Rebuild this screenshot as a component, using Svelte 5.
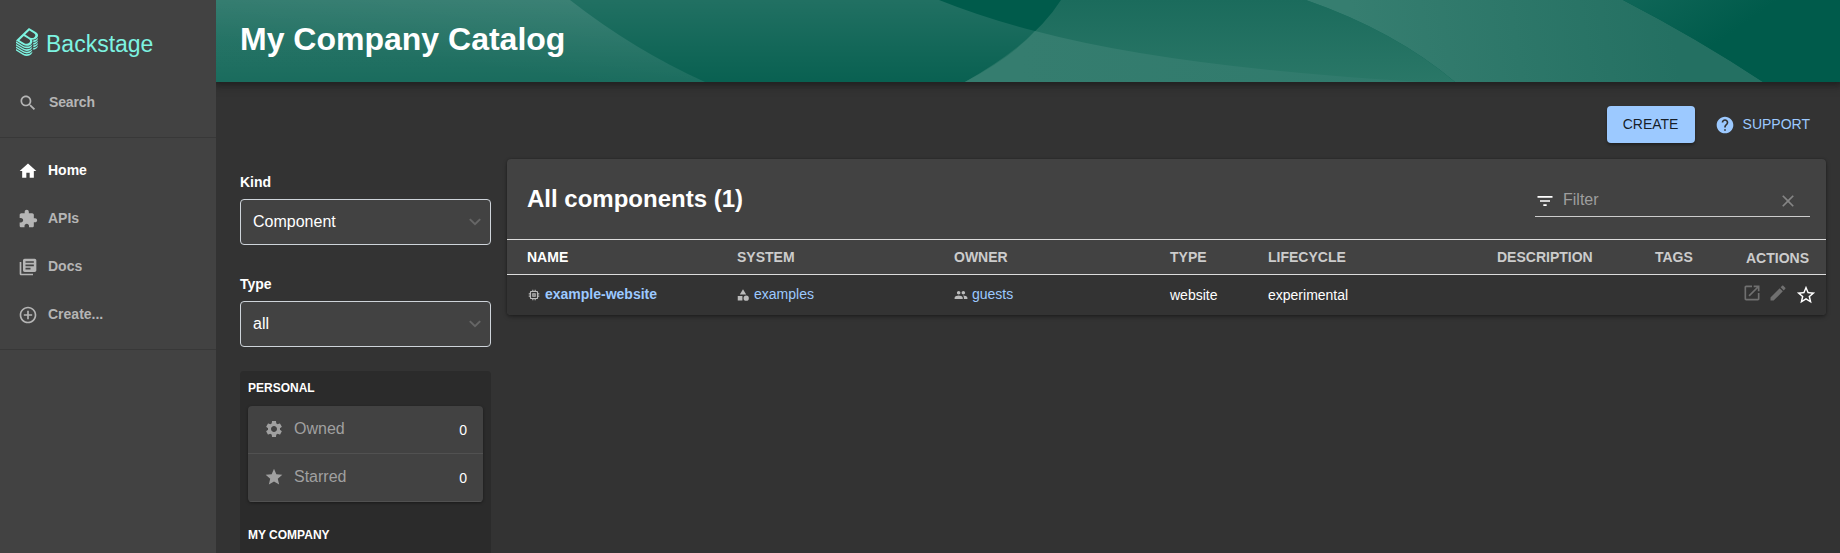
<script>
  const icons = {
    search: 'M15.5 14h-.79l-.28-.27C15.41 12.59 16 11.11 16 9.5 16 5.91 13.09 3 9.5 3S3 5.91 3 9.5 5.91 16 9.5 16c1.61 0 3.09-.59 4.23-1.57l.27.28v.79l5 4.99L20.49 19l-4.99-5zm-6 0C7.01 14 5 11.99 5 9.5S7.01 5 9.5 5 14 7.01 14 9.5 11.99 14 9.5 14z',
    home: 'M10 20v-6h4v6h5v-8h3L12 3 2 12h3v8z',
    apis: 'M20.5 11H19V7c0-1.1-.9-2-2-2h-4V3.5C13 2.12 11.88 1 10.5 1S8 2.12 8 3.5V5H4c-1.1 0-1.99.9-1.99 2v3.8H3.5c1.49 0 2.7 1.21 2.7 2.7s-1.21 2.7-2.7 2.7H2V20c0 1.1.9 2 2 2h3.8v-1.5c0-1.49 1.21-2.7 2.7-2.7 1.49 0 2.7 1.21 2.7 2.7V22H17c1.1 0 2-.9 2-2v-4h1.5c1.38 0 2.5-1.12 2.5-2.5S21.88 11 20.5 11z',
    docs: 'M4 6H2v14c0 1.1.9 2 2 2h14v-2H4V6zm16-4H8c-1.1 0-2 .9-2 2v12c0 1.1.9 2 2 2h12c1.1 0 2-.9 2-2V4c0-1.1-.9-2-2-2zm-1 9H9V9h10v2zm-4 4H9v-2h6v2zm4-8H9V5h10v2z',
    create: 'M13 7h-2v4H7v2h4v4h2v-4h4v-2h-4V7zm-1-5C6.48 2 2 6.48 2 12s4.48 10 10 10 10-4.48 10-10S17.52 2 12 2zm0 18c-4.41 0-8-3.59-8-8s3.59-8 8-8 8 3.59 8 8-3.59 8-8 8z',
    help: 'M12 2C6.48 2 2 6.48 2 12s4.48 10 10 10 10-4.48 10-10S17.52 2 12 2zm1 17h-2v-2h2v2zm2.07-7.75l-.9.92C13.45 12.9 13 13.5 13 15h-2v-.5c0-1.1.45-2.1 1.17-2.83l1.24-1.26c.37-.36.59-.86.59-1.41 0-1.1-.9-2-2-2s-2 .9-2 2H8c0-2.21 1.79-4 4-4s4 1.79 4 4c0 .88-.36 1.68-.93 2.25z',
    settings: 'M19.14 12.94c.04-.3.06-.61.06-.94 0-.32-.02-.64-.07-.94l2.03-1.58c.18-.14.23-.41.12-.61l-1.92-3.32c-.12-.22-.37-.29-.59-.22l-2.39.96c-.5-.38-1.03-.7-1.62-.94l-.36-2.54c-.04-.24-.24-.41-.48-.41h-3.84c-.24 0-.43.17-.47.41l-.36 2.54c-.59.24-1.13.57-1.62.94l-2.39-.96c-.22-.08-.47 0-.59.22L2.74 8.87c-.12.21-.08.47.12.61l2.03 1.58c-.05.3-.09.63-.09.94s.02.64.07.94l-2.03 1.58c-.18.14-.23.41-.12.61l1.92 3.32c.12.22.37.29.59.22l2.39-.96c.5.38 1.03.7 1.62.94l.36 2.54c.05.24.24.41.48.41h3.84c.24 0 .44-.17.47-.41l.36-2.54c.59-.24 1.13-.56 1.62-.94l2.39.96c.22.08.47 0 .59-.22l1.92-3.32c.12-.22.07-.47-.12-.61l-2.01-1.58zM12 15.6c-1.98 0-3.6-1.62-3.6-3.6s1.62-3.6 3.6-3.6 3.6 1.62 3.6 3.6-1.62 3.6-3.6 3.6z',
    star: 'M12 17.27L18.18 21l-1.64-7.03L22 9.24l-7.19-.61L12 2 9.19 8.63 2 9.24l5.46 4.73L5.82 21z',
    starBorder: 'M22 9.24l-7.19-.62L12 2 9.19 8.63 2 9.24l5.46 4.73L5.82 21 12 17.27 18.18 21l-1.63-7.03L22 9.24zM12 15.4l-3.76 2.27 1-4.28-3.32-2.88 4.38-.38L12 6.1l1.71 4.04 4.38.38-3.32 2.88 1 4.28L12 15.4z',
    filter: 'M10 18h4v-2h-4v2zM3 6v2h18V6H3zm3 7h12v-2H6v2z',
    clear: 'M19 6.41L17.59 5 12 10.59 6.41 5 5 6.41 10.59 12 5 17.59 6.41 19 12 13.41 17.59 19 19 17.59 13.41 12z',
    open: 'M19 19H5V5h7V3H5c-1.11 0-2 .9-2 2v14c0 1.1.89 2 2 2h14c1.1 0 2-.9 2-2v-7h-2v7zM14 3v2h3.59l-9.83 9.83 1.41 1.41L19 6.41V10h2V3h-7z',
    edit: 'M3 17.25V21h3.75L17.81 9.94l-3.75-3.75L3 17.25zM20.71 7.04c.39-.39.39-1.02 0-1.41l-2.34-2.34c-.39-.39-1.02-.39-1.41 0l-1.83 1.83 3.75 3.75 1.83-1.83z',
    memory: 'M15 9H9v6h6V9zm-2 4h-2v-2h2v2zm8-2V9h-2V7c0-1.1-.9-2-2-2h-2V3h-2v2h-2V3H9v2H7c-1.1 0-2 .9-2 2v2H3v2h2v2H3v2h2v2c0 1.1.9 2 2 2h2v2h2v-2h2v2h2v-2h2c1.1 0 2-.9 2-2v-2h2v-2h-2v-2h2zm-4 6H7V7h10v10z',
    category: 'M12 2l-5.5 9h11z M17.5 13a4.5 4.5 0 1 0 0 9 4.5 4.5 0 1 0 0-9z M3 13.5h8v8H3z',
    group: 'M16 11c1.66 0 2.99-1.34 2.99-3S17.66 5 16 5c-1.66 0-3 1.34-3 3s1.34 3 3 3zm-8 0c1.66 0 2.99-1.34 2.99-3S9.66 5 8 5C6.34 5 5 6.34 5 8s1.34 3 3 3zm0 2c-2.33 0-7 1.17-7 3.5V19h14v-2.5c0-2.33-4.67-3.5-7-3.5zm8 0c-.29 0-.62.02-.97.05 1.16.84 1.97 1.97 1.97 3.45V19h6v-2.5c0-2.33-4.67-3.5-7-3.5z'
  };
  const logo = 'M303,166.05a80.69,80.69,0,0,0,13.45-10.37c.79-.77,1.55-1.53,2.3-2.3a83.12,83.12,0,0,0,7.93-9.38A63.69,63.69,0,0,0,333,133.23a48.58,48.58,0,0,0,4.35-16.4c1.49-19.39-10-38.67-35.62-54.22L198.56,0,78.3,115.23,0,190.25l108.6,65.91a111.59,111.59,0,0,0,57.76,16.41c24.92,0,48.8-8.8,66.42-25.69,19.16-18.36,25.52-42.12,13.7-61.87a49.22,49.22,0,0,0-6.8-8.87A89.17,89.17,0,0,0,259,178.29h.15a85.08,85.08,0,0,0,31-5.79A80.88,80.88,0,0,0,303,166.05ZM202.45,225.86c-19.32,18.51-50.4,21.23-75.7,5.9L51.61,186.15l67.45-64.64,76.41,46.38C223,184.58,221.49,207.61,202.45,225.86Zm8.93-82.22-70.65-42.89L205.14,39,274.51,81.1c25.94,15.72,29.31,37,10.55,55A60.69,60.69,0,0,1,211.38,143.64Zm29.86,190c-19.57,18.75-46.17,29.09-74.88,29.09a123.73,123.73,0,0,1-64.1-18.2L0,282.52v24.67L108.6,373.1a111.6,111.6,0,0,0,57.76,16.42c24.92,0,48.8-8.81,66.42-25.69,12.88-12.34,20-27.13,19.68-41.49v-1.79A87.27,87.27,0,0,1,241.24,333.68Zm0-39c-19.57,18.75-46.17,29.08-74.88,29.08a123.81,123.81,0,0,1-64.1-18.19L0,243.53v24.68l108.6,65.91a111.6,111.6,0,0,0,57.76,16.42c24.92,0,48.8-8.81,66.42-25.69,12.88-12.34,20-27.13,19.68-41.5v-1.78A87.27,87.27,0,0,1,241.24,294.7Zm0-39c-19.57,18.76-46.17,29.09-74.88,29.09a123.81,123.81,0,0,1-64.1-18.19L0,204.55v24.67l108.6,65.91a111.59,111.59,0,0,0,57.76,16.41c24.92,0,48.8-8.8,66.42-25.68,12.88-12.35,20-27.13,19.68-41.5v-1.82A86.09,86.09,0,0,1,241.24,255.71Zm83.7,25.74a94.15,94.15,0,0,1-60.2,25.86h0V334a81.6,81.6,0,0,0,51.74-22.37c14-13.38,21.14-28.11,21-42.64v-2.19A94.92,94.92,0,0,1,324.94,281.45Zm-83.7,91.21c-19.57,18.76-46.17,29.09-74.88,29.09a123.73,123.73,0,0,1-64.1-18.2L0,321.5v24.68l108.6,65.9a111.6,111.6,0,0,0,57.76,16.42c24.92,0,48.8-8.8,66.42-25.69,12.88-12.34,20-27.13,19.68-41.49v-1.79A86.29,86.29,0,0,1,241.24,372.66ZM327,162.45c-.68.69-1.35,1.38-2.05,2.06a94.37,94.37,0,0,1-10.64,8.65,91.35,91.35,0,0,1-11.6,7,94.53,94.53,0,0,1-26.24,8.71,97.69,97.69,0,0,1-14.16,1.57c.5,1.61.9,3.25,1.25,4.9a53.27,53.27,0,0,1,1.14,12V217h.05a84.41,84.41,0,0,0,25.35-5.55,81,81,0,0,0,26.39-16.82c.8-.77,1.5-1.56,2.26-2.34a82.08,82.08,0,0,0,7.93-9.38A63.76,63.76,0,0,0,333,172.17a48.55,48.55,0,0,0,4.32-16.45c.09-1.23.2-2.47.19-3.7V150q-1.08,1.54-2.25,3.09A96.73,96.73,0,0,1,327,162.45Zm0,77.92c-.69.7-1.31,1.41-2,2.1a94.2,94.2,0,0,1-60.2,25.86h0l0,26.67h0a81.6,81.6,0,0,0,51.74-22.37A73.51,73.51,0,0,0,333,250.13a48.56,48.56,0,0,0,4.32-16.44c.09-1.24.2-2.47.19-3.71v-2.19c-.74,1.07-1.46,2.15-2.27,3.21A95.68,95.68,0,0,1,327,240.37Zm0-39c-.69.7-1.31,1.41-2,2.1a93.18,93.18,0,0,1-10.63,8.65,91.63,91.63,0,0,1-11.63,7,95.47,95.47,0,0,1-37.94,10.18h0V256h0a81.65,81.65,0,0,0,51.74-22.37A73.51,73.51,0,0,0,333,211.13a48.56,48.56,0,0,0,4.32-16.44c.09-1.24.2-2.47.19-3.71v-2.2c-.74,1.08-1.46,2.16-2.27,3.22A95.68,95.68,0,0,1,327,201.37Z';
  const nav = [
    { label: 'Home', icon: 'home', active: true },
    { label: 'APIs', icon: 'apis' },
    { label: 'Docs', icon: 'docs' },
    { label: 'Create...', icon: 'create' }
  ];
  const selects = [
    { label: 'Kind', value: 'Component' },
    { label: 'Type', value: 'all' }
  ];
  const personal = [
    { label: 'Owned', icon: 'settings', count: 0 },
    { label: 'Starred', icon: 'star', count: 0 }
  ];
  const columns = ['Name', 'System', 'Owner', 'Type', 'Lifecycle', 'Description', 'Tags'];
</script>

{#snippet icon(path, size)}
  <svg class="icon" width={size} height={size} viewBox="0 0 24 24" fill="currentColor"><path d={path} /></svg>
{/snippet}

<div class="app">
  <nav class="sidebar">
    <div class="logo">
      <svg width="22" height="28" viewBox="0 0 337.46 428.5" fill="#7df3e1"><path d={logo} /></svg>
      <span>Backstage</span>
    </div>
    <div class="item search">{@render icon(icons.search, 20)}<span>Search</span></div>
    <hr />
    <div class="links">
      {#each nav as n}
        <div class="item" class:active={n.active}>{@render icon(icons[n.icon], 20)}<span>{n.label}</span></div>
      {/each}
    </div>
    <hr />
  </nav>

  <main>
    <header>
      <svg class="waves" width="1624" height="82" viewBox="216 0 1624 82" preserveAspectRatio="none">
        <defs>
          <linearGradient id="g1" x1="0" y1="0" x2="0" y2="1"><stop stop-color="#fff" stop-opacity=".13" /><stop offset="1" stop-color="#fff" stop-opacity=".035" /></linearGradient>
          <linearGradient id="g2" gradientUnits="userSpaceOnUse" x1="600" y1="0" x2="590" y2="82"><stop stop-color="#fff" stop-opacity=".12" /><stop offset="1" stop-color="#fff" stop-opacity=".07" /></linearGradient>
          <linearGradient id="g3" gradientUnits="userSpaceOnUse" x1="0" y1="0" x2="0" y2="82"><stop stop-color="#1b6b5c" /><stop offset="1" stop-color="#2a7767" /></linearGradient>
          <linearGradient id="g4" gradientUnits="userSpaceOnUse" x1="1350" y1="0" x2="1660" y2="-50"><stop stop-color="#367e70" /><stop offset="1" stop-color="#247062" /></linearGradient>
          <linearGradient id="g5" gradientUnits="userSpaceOnUse" x1="1640" y1="-30" x2="1700" y2="55"><stop stop-color="#12685a" /><stop offset="1" stop-color="#005b4b" /></linearGradient>
          <linearGradient id="g6" gradientUnits="userSpaceOnUse" x1="1020" y1="0" x2="1400" y2="0"><stop stop-color="#357d6f" /><stop offset="1" stop-color="#307a6c" /></linearGradient>
        </defs>
        <rect x="216" width="1624" height="82" fill="#005b4b" />
        <path d="M216 0H939Q984 18 1035 31L1050 82H216Z" fill="url(#g1)" />
        <path d="M216 0H570Q634 50 705 82H216Z" fill="url(#g2)" />
        <path d="M1061 0H1306Q1395 31 1455 82H965Q1034 43 1061 0Z" fill="url(#g3)" />
        <path d="M1035 31Q1170 67 1420 82H965Q1012 57 1035 31Z" fill="url(#g6)" />
        <path d="M1306 0H1623Q1698 39 1763 82H1455Q1395 31 1306 0Z" fill="url(#g4)" />
        <path d="M1623 0H1840V82H1763Q1698 39 1623 0Z" fill="url(#g5)" />
      </svg>
      <h1>My Company Catalog</h1>
    </header>

    <div class="content">
      <div class="toolbar">
        <button class="create">CREATE</button>
        <button class="support">{@render icon(icons.help, 20)}<span>SUPPORT</span></button>
      </div>
      <div class="columns">
        <aside>
          {#each selects as s}
            <div class="field">
              <div class="label">{s.label}</div>
              <div class="select">
                <span>{s.value}</span>
                <svg width="12" height="8" viewBox="0 0 12 8" fill="none" stroke="#666" stroke-width="2"><path d="M.8 1.1 6 6.2 11.2 1.1" /></svg>
              </div>
            </div>
          {/each}
          <div class="panel">
            <h3>PERSONAL</h3>
            <div class="list">
              {#each personal as p}
                <div class="entry">{@render icon(icons[p.icon], 20)}<span class="name">{p.label}</span><span class="count">{p.count}</span></div>
              {/each}
            </div>
            <h3>MY COMPANY</h3>
          </div>
        </aside>

        <section class="card">
          <div class="top">
            <h2>All components (1)</h2>
            <div class="filter">
              {@render icon(icons.filter, 20)}
              <span>Filter</span>
              {@render icon(icons.clear, 20)}
            </div>
          </div>
          <div class="row head">
            {#each columns as c, i}
              <div class:first={i === 0}>{c}</div>
            {/each}
            <div class="actions-title">Actions</div>
          </div>
          <div class="row body">
            <div class="link strong">{@render icon(icons.memory, 14)}<a href="#website">example-website</a></div>
            <div class="link system">{@render icon(icons.category, 14)}<a href="#examples">examples</a></div>
            <div class="link owner">{@render icon(icons.group, 14)}<a href="#guests">guests</a></div>
            <div>website</div>
            <div>experimental</div>
            <div></div>
            <div></div>
            <div class="actions">
              {@render icon(icons.open, 20)}
              {@render icon(icons.edit, 20)}
              <span class="fav">{@render icon(icons.starBorder, 22)}</span>
            </div>
          </div>
        </section>
      </div>
    </div>
  </main>
</div>

<style>
  :global(body) { margin: 0; overflow: hidden; }
  * { box-sizing: border-box; }
  .app { display: flex; width: 100%; height: 553px; overflow: hidden; background: #333; color: #fff; font: 14px/20px "Liberation Sans", Arial, sans-serif; }
  .icon { flex: none; display: block; }
  h1, h2, h3 { margin: 0; }
  button { font: inherit; border: 0; background: none; }

  .sidebar { width: 216px; flex: none; background: #424242; color: #b5b5b5; font-weight: 700; }
  .logo { display: flex; height: 78px; padding: 28px 0 0 16px; gap: 8px; }
  .logo span { color: #7df3e1; font-weight: 400; font-size: 23px; line-height: 33px; }
  .item { display: flex; align-items: center; height: 48px; padding-left: 18px; gap: 10px; }
  .search { gap: 11px; height: 49px; margin-bottom: 10px; }
  .search span { margin-top: -2px; letter-spacing: -.15px; }
  .active { color: #fff; }
  hr { margin: 0; border: 0; height: 1px; background: #383838; }
  .links { padding: 8px 0 11px; }
  .links .item span { margin-top: -1px; }
  .links .item .icon { margin-top: 1px; }

  main { flex: 1; min-width: 0; }
  header { position: relative; height: 82px; padding-left: 24px; box-shadow: 0 0 8px 3px rgba(20, 20, 20, .7); clip-path: inset(0 0 -20px 0); }
  .waves { position: absolute; inset: 0; width: 100%; height: 82px; }
  h1 { position: relative; font-size: 32px; line-height: 79px; }
  .content { padding: 24px 14px 0 24px; }
  .toolbar { display: flex; justify-content: flex-end; height: 53px; padding-right: 10px; align-items: flex-start; }
  .create { width: 88px; height: 37px; padding: 0 0 2px; border-radius: 4px; background: #9cc9ff; color: rgba(0, 0, 0, .87); box-shadow: 0 2px 3px rgba(0, 0, 0, .35); }
  .support { display: flex; align-items: center; height: 37px; padding: 0 6px 0 20px; gap: 8px; color: #9cc9ff; }
  .support span { margin-top: -2px; }
  .support .icon { margin-top: 1px; }
  .columns { display: flex; gap: 16px; }

  aside { width: 251px; padding-top: 13px; }
  .field { height: 102px; }
  .label { font-weight: 700; height: 27px; }
  .select { display: flex; align-items: center; justify-content: space-between; height: 46px; padding: 0 9px 0 12px; border: 1px solid #ced4da; border-radius: 4px; background: #424242; font-size: 16px; }
  .panel { height: 300px; margin-top: -5px; padding: 0 8px; background: #2b2b2b; border-radius: 4px; }
  h3 { font-size: 12px; line-height: 34px; height: 35px; }
  .list { margin-bottom: 16px; border-radius: 4px; overflow: hidden; background: #424242; box-shadow: 0 1px 3px rgba(0, 0, 0, .4); }
  .entry { display: flex; align-items: center; height: 48px; padding: 0 16px; border-bottom: 1px solid #515151; color: #a0a0a0; font-size: 16px; }
  .entry .icon { margin-top: -2px; }
  .entry .name { flex: 1; margin: -2px 0 0 10px; }
  .entry .count { color: #fff; font-size: 14px; }

  .card { flex: 1; min-width: 0; height: 156px; border-radius: 4px; background: #424242; box-shadow: 0 2px 4px rgba(0, 0, 0, .35), 0 0 2px rgba(0, 0, 0, .3); overflow: hidden; }
  .top { display: flex; justify-content: space-between; height: 80px; padding: 0 16px 0 20px; }
  h2 { font-size: 24px; line-height: 80px; }
  .filter { display: flex; align-items: center; width: 275px; height: 32px; margin-top: 26px; padding: 0 12px 0 0; border-bottom: 1px solid #ccc; color: #fff; font-size: 16px; }
  .filter span { flex: 1; margin: -2px 0 0 8px; color: #9e9e9e; }
  .filter .icon:last-child { color: #858585; }
  .row { display: grid; grid-template-columns: 210px 217px 216px 98px 229px 158px 91px 1fr; padding: 0 16px 0 20px; }
  .head { height: 36px; border: solid #dcdcdc; border-width: 1px 0; color: #ccc; font-weight: 700; line-height: 35px; text-transform: uppercase; }
  .first { color: #fff; }
  .actions-title { line-height: 37px; }
  .body { height: 40px; background: #333; line-height: 41px; }
  .link { display: flex; align-items: center; color: #bbb; gap: 4px; line-height: 39px; height: 39px; }
  .link a { color: #9cc9ff; text-decoration: none; }
  .strong { font-weight: 700; }
  .system { gap: 4px; margin-left: -1px; }
  .actions { display: flex; height: 36px; align-items: center; color: #707070; margin-left: -4px; gap: 6px; }
  .fav { color: #fff; margin: 3px 0 0 1px; }
</style>
